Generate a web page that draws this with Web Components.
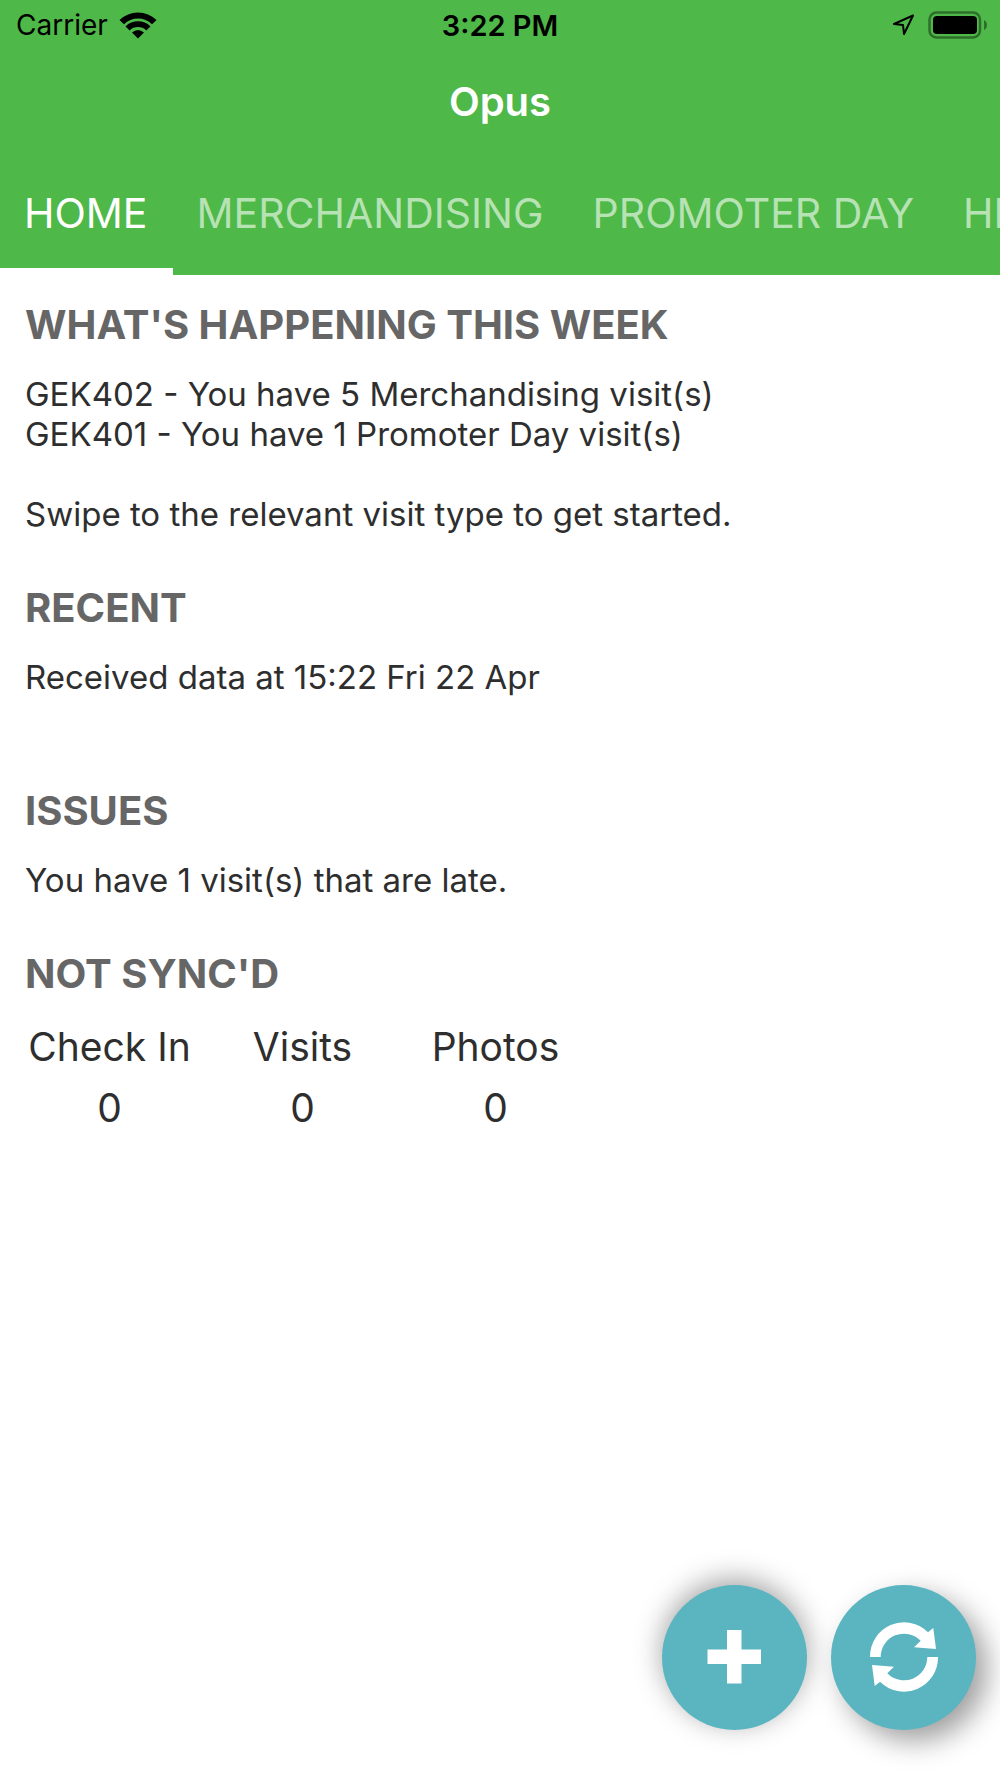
<!DOCTYPE html>
<html lang="en">
<head>
<meta charset="utf-8">
<meta name="viewport" content="width=device-width, initial-scale=1">
<title>Opus</title>
<style>
html, body {
	margin: 0;
	height: 100%;
}
body {
	font-family: Inter, "Liberation Sans", sans-serif;
	color: #2e2e2e;
	background: #fff;
	--brand: #4eb848;
	--accent: #5ab5c1;
	--gutter: 25px;
}
</style>
</head>
<body>
<opus-app>
	<status-bar slot="header" carrier="Carrier" time="3:22 PM"></status-bar>
	<title-bar slot="header">Opus</title-bar>
	<tab-strip slot="header" labels="HOME|MERCHANDISING|PROMOTER DAY|HELP" selected="0"></tab-strip>

	<info-section heading="WHAT'S HAPPENING THIS WEEK">
		<p>GEK402 - You have 5 Merchandising visit(s)<br>GEK401 - You have 1 Promoter Day visit(s)</p>
		<p>Swipe to the relevant visit type to get started.</p>
	</info-section>
	<info-section heading="RECENT" spaced>
		<p>Received data at 15:22 Fri 22 Apr</p>
	</info-section>
	<info-section heading="ISSUES">
		<p>You have 1 visit(s) that are late.</p>
	</info-section>
	<info-section heading="NOT SYNC'D">
		<sync-counts checkin="0" visits="0" photos="0"></sync-counts>
	</info-section>

	<round-button slot="actions" icon="add" label="Add visit"></round-button>
	<round-button slot="actions" icon="sync" label="Sync"></round-button>
</opus-app>

<script>
const icons = {
	add: '<path d="M65 45h14.500v19.500h19.500v14.500h-19.500v19.500h-14.500v-19.500h-19.500v-14.500h19.500z"/>',
	sync: `
		<path id="half" d="M39 72A34 34 0 0 1 97 47.300L102.300 43L105 64L83 62.300L89.700 55.700A23.300 23.300 0 0 0 49.700 72Z"/>
		<use href="#half" transform="rotate(180 73 72)"/>`
}

class BaseElement extends HTMLElement {
	constructor() {
		super()
		this.attachShadow({ mode: 'open' })
	}
	connectedCallback() {
		this.shadowRoot.innerHTML = this.template()
	}
}

class OpusApp extends BaseElement {
	template() {
		return `
<style>
:host {
	display: flex;
	flex-direction: column;
	min-height: 100vh;
}
header {
	background: var(--brand);
}
main {
	flex: 1;
	padding: 26px var(--gutter);
}
footer {
	display: flex;
	justify-content: flex-end;
	gap: 24px;
	padding: 0 24px 48px;
}
</style>
<header><slot name="header"></slot></header>
<main><slot></slot></main>
<footer><slot name="actions"></slot></footer>`
	}
}

class StatusBar extends BaseElement {
	template() {
		return `
<style>
:host {
	display: grid;
	grid-template-columns: 1fr auto 1fr;
	align-items: center;
	height: 50px;
	padding: 0 12px;
	color: #000;
	font-size: 28px;
}
div {
	display: flex;
	align-items: center;
	gap: 11px;
	padding-left: 4px;
}
.right {
	justify-content: flex-end;
	gap: 13px;
	padding: 0;
}
time {
	font-size: 29px;
	font-weight: 600;
}
svg {
	display: block;
}
</style>
<div>
	<span>${this.getAttribute('carrier')}</span>
	<svg width="38" height="28" viewBox="0 0 38 28" aria-hidden="true">
		<path d="M19 27.500L13 21.500Q19 16.500 25 21.500Z"/>
		<path d="M6.500 15.400A17.800 17.800 0 0 1 31.500 15.400L27.300 19.400A12 12 0 0 0 10.700 19.400Z"/>
		<path d="M.5 9A26.400 26.400 0 0 1 37.500 9L33 13.200A20 20 0 0 0 5 13.200Z"/>
	</svg>
</div>
<time>${this.getAttribute('time')}</time>
<div class="right">
	<svg width="23" height="24" viewBox="0 0 23 24" aria-hidden="true">
		<path d="M2 11L21 2.500L12 21L11 12Z" fill="none" stroke="#000" stroke-width="2" stroke-linejoin="round"/>
	</svg>
	<svg width="60" height="28" viewBox="0 0 60 28" aria-hidden="true">
		<rect x="1.500" y="1.500" width="50.500" height="25" rx="7" fill="none" stroke="#000" stroke-opacity=".4" stroke-width="2.500"/>
		<rect x="5" y="5" width="44" height="18" rx="4"/>
		<path d="M56 9Q59 10.500 59 14T56 19Z" fill-opacity=".4"/>
	</svg>
</div>`
	}
}

class TitleBar extends BaseElement {
	template() {
		return `
<style>
:host {
	display: flex;
	align-items: center;
	justify-content: center;
	height: 103px;
	color: #fff;
}
h1 {
	margin: 0;
	font-size: 40px;
	font-weight: 600;
}
</style>
<h1><slot></slot></h1>`
	}
}

class TabStrip extends BaseElement {
	template() {
		const selected = Number(this.getAttribute('selected'))
		const tabs = this.getAttribute('labels').split('|').map((label, i) =>
			`<button role="tab" aria-selected="${i === selected}">${label}</button>`)
		return `
<style>
:host {
	display: block;
	overflow-x: auto;
	scrollbar-width: none;
}
div {
	display: flex;
}
button {
	flex: none;
	height: 122px;
	padding: 4px 25px 0 24px;
	border: 0;
	border-bottom: 7px solid transparent;
	background: none;
	color: rgba(255, 255, 255, .6);
	font: inherit;
	font-size: 41px;
}
button[aria-selected="true"] {
	color: #fff;
	border-bottom-color: #fff;
}
</style>
<div role="tablist">${tabs.join('')}</div>`
	}
	connectedCallback() {
		super.connectedCallback()
		this.shadowRoot.addEventListener('click', this.onClick)
	}
	onClick = e => {
		const tab = e.target.closest('button')
		if (!tab) return
		this.shadowRoot.querySelectorAll('button').forEach(x => x.setAttribute('aria-selected', x === tab))
	}
}

class InfoSection extends BaseElement {
	template() {
		return `
<style>
:host {
	display: block;
	margin-bottom: 50px;
}
:host([spaced]) {
	margin-bottom: 90px;
}
h2 {
	margin: 0 0 25px;
	color: #666;
	font-size: 40px;
	line-height: 48px;
	font-weight: 700;
}
::slotted(p) {
	margin: 0 0 40px;
	font-size: 33px;
	line-height: 40px;
}
::slotted(p:last-child) {
	margin-bottom: 0;
}
</style>
<h2>${this.getAttribute('heading')}</h2>
<slot></slot>`
	}
}

class SyncCounts extends BaseElement {
	template() {
		return `
<style>
:host {
	display: block;
}
table {
	table-layout: fixed;
	width: 579px;
	margin-left: -12px;
	border-collapse: collapse;
	text-align: center;
	font-size: 39px;
	line-height: 48px;
}
th, td {
	padding: 0;
	font-weight: 400;
}
th {
	padding-bottom: 13px;
}
</style>
<table>
	<thead><tr><th>Check In</th><th>Visits</th><th>Photos</th></tr></thead>
	<tbody><tr>
		<td>${this.getAttribute('checkin')}</td>
		<td>${this.getAttribute('visits')}</td>
		<td>${this.getAttribute('photos')}</td>
	</tr></tbody>
</table>`
	}
}

class RoundButton extends BaseElement {
	template() {
		const icon = this.getAttribute('icon')
		return `
<style>
:host {
	display: block;
}
button {
	display: block;
	width: 145px;
	height: 145px;
	padding: 0;
	border: 0;
	border-radius: 50%;
	background: var(--accent);
	box-shadow: 0 -6px 28px rgba(0, 0, 0, .36);
}
:host([icon="sync"]) button {
	box-shadow: 11px 11px 28px rgba(0, 0, 0, .38);
}
svg {
	display: block;
	width: 100%;
	fill: #fff;
}
</style>
<button aria-label="${this.getAttribute('label')}">
	<svg viewBox="0 0 145 145" aria-hidden="true">${icons[icon]}</svg>
</button>`
	}
}

customElements.define('opus-app', OpusApp)
customElements.define('status-bar', StatusBar)
customElements.define('title-bar', TitleBar)
customElements.define('tab-strip', TabStrip)
customElements.define('info-section', InfoSection)
customElements.define('sync-counts', SyncCounts)
customElements.define('round-button', RoundButton)
</script>
</body>
</html>
